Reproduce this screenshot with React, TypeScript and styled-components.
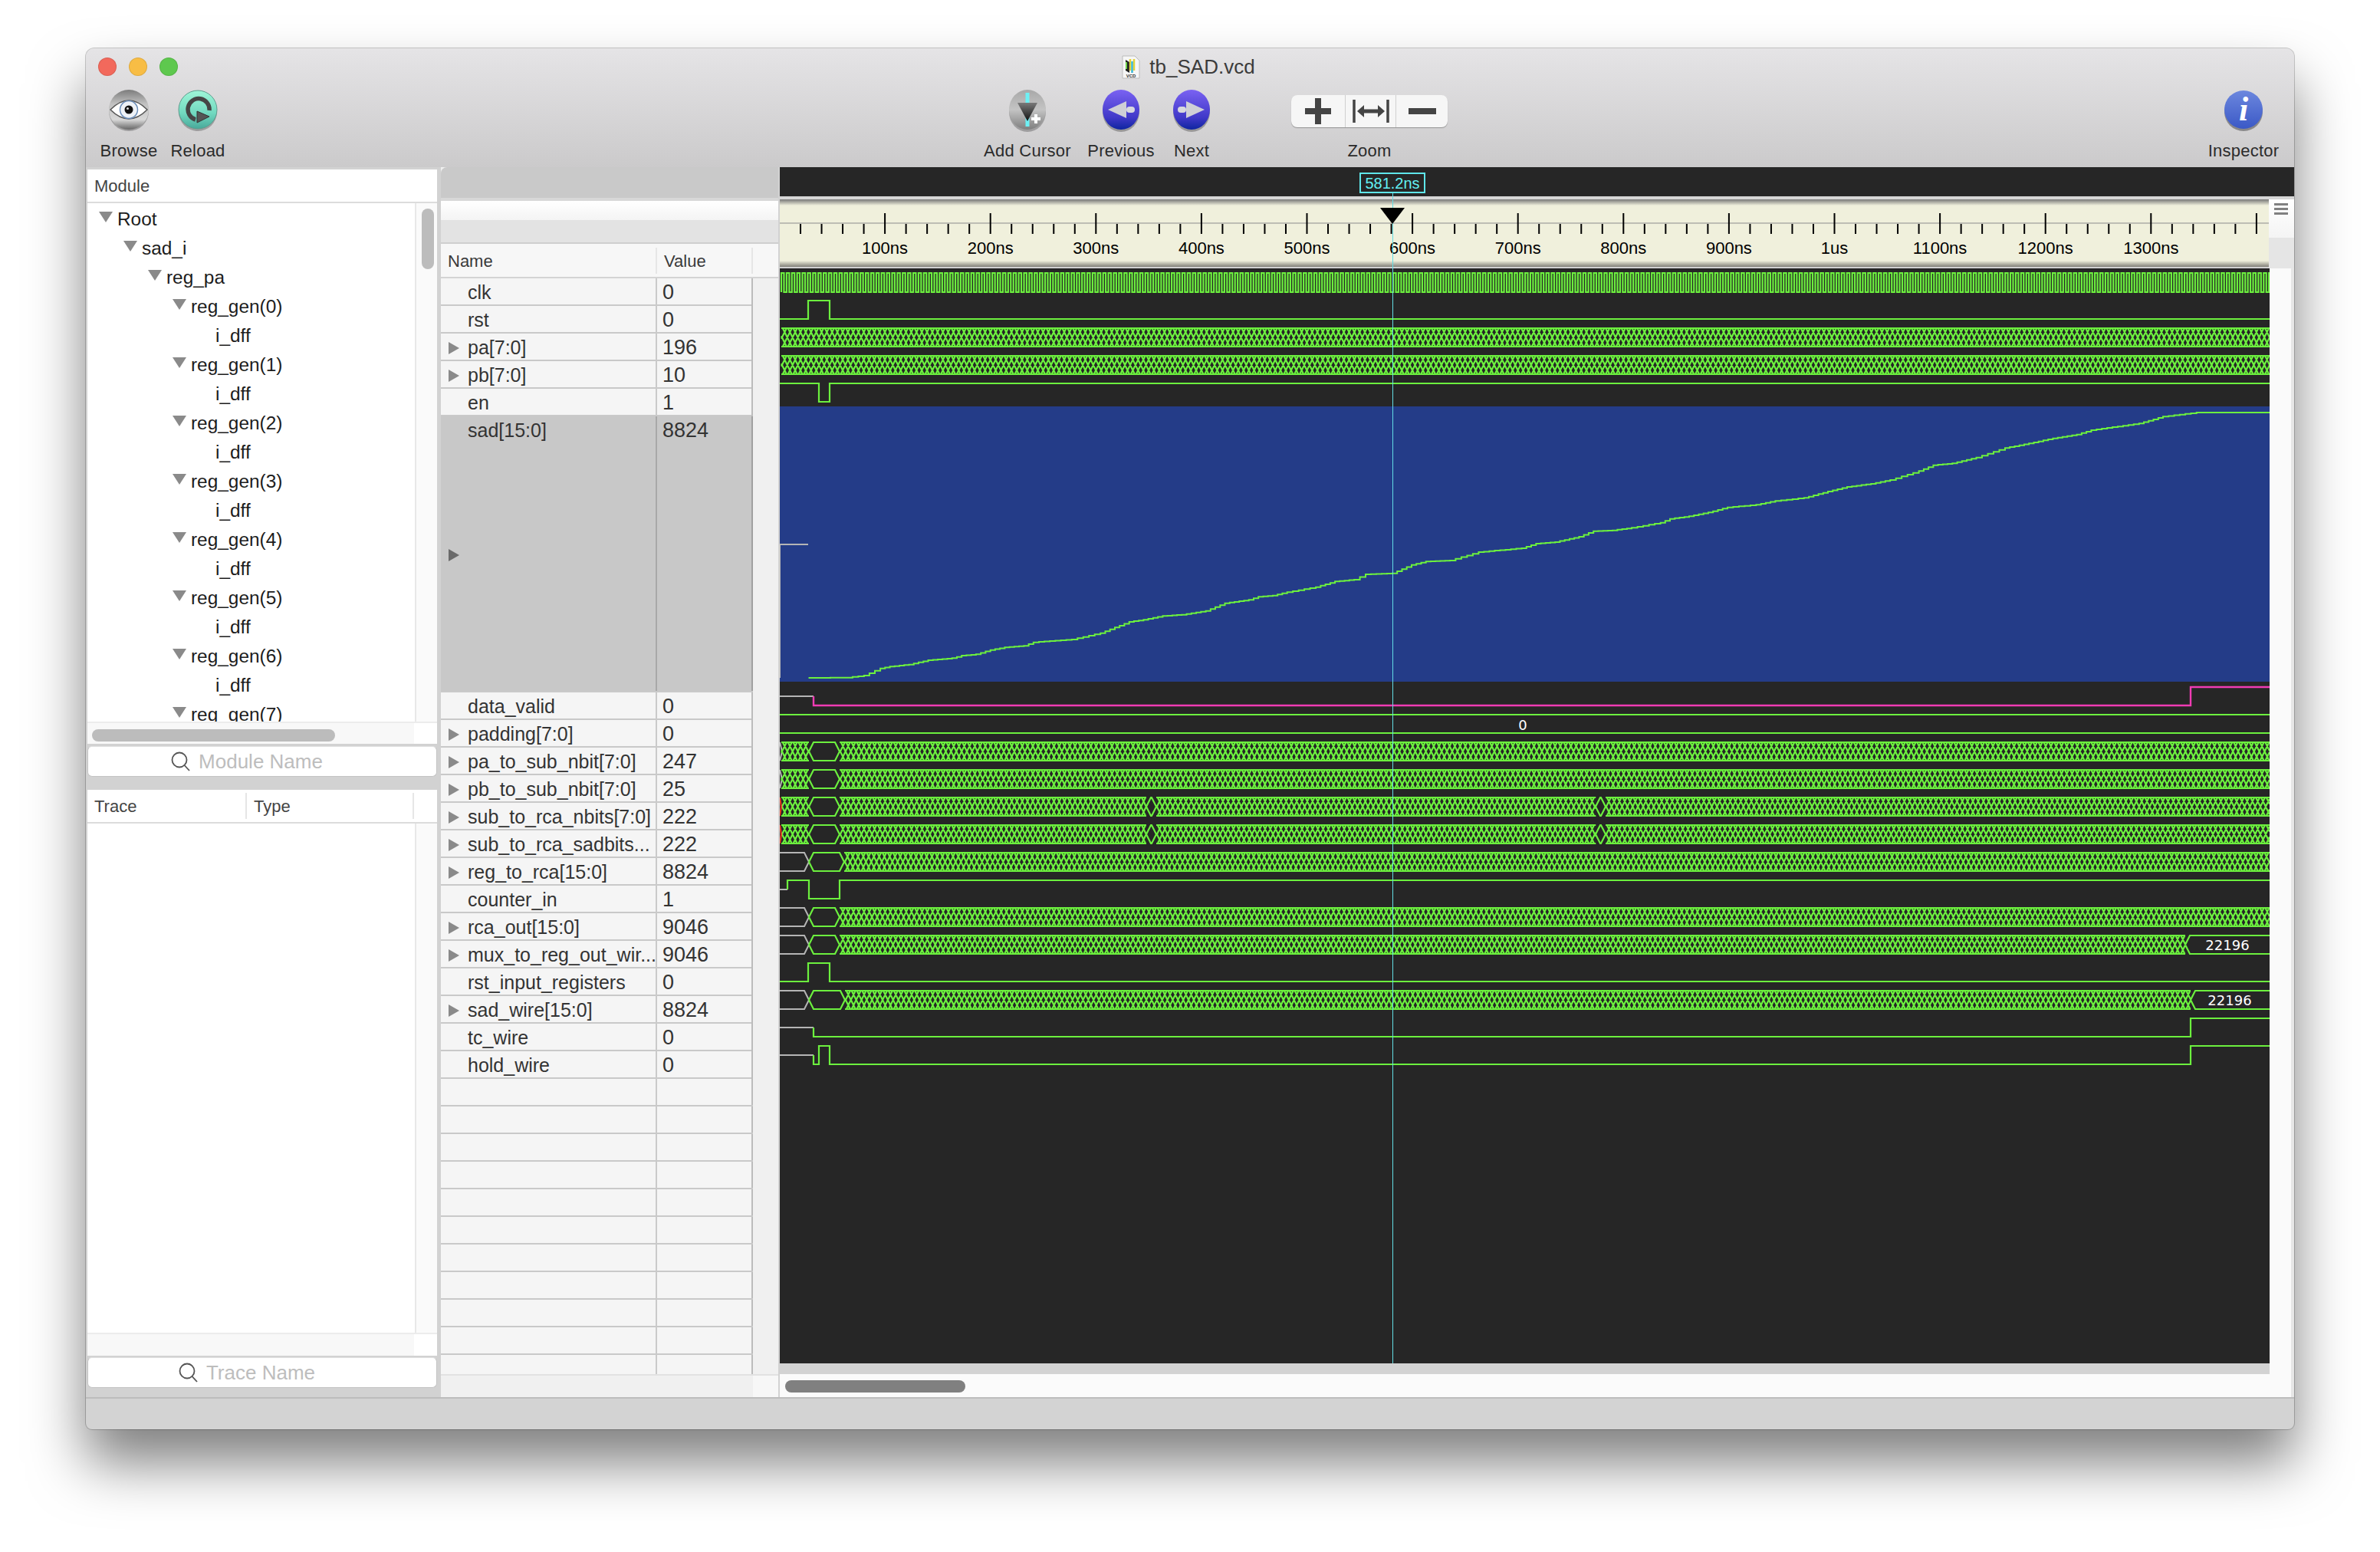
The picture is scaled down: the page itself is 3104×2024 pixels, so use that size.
import styled, { createGlobalStyle } from 'styled-components'

const GlobalStyle = createGlobalStyle`
  html, body {
    margin: 0;
    background: #fff;
    font-family: "Liberation Sans", Arial, sans-serif;
  }
`

const GREEN = '#6cf03e'
const GREY = '#b5b5b5'
const PINK = '#f03cb4'

const Page = styled.div`
  width: 3104px;
  height: 2024px;
  padding: 63px 0 0 112px;
  box-sizing: border-box;
  overflow: hidden;
`

const Window = styled.div`
  width: 2880px;
  height: 1801px;
  display: flex;
  flex-direction: column;
  border-radius: 11px 11px 8px 8px;
  background: #d3d3d3;
  overflow: hidden;
  box-shadow: 0 0 0 1px rgba(0, 0, 0, 0.2), 0 44px 72px rgba(0, 0, 0, 0.5);
`

const Header = styled.header`
  height: 155px;
  flex: none;
  display: flex;
  flex-direction: column;
  background: linear-gradient(#e5e4e6, #cbcacb);
`

const TitleRow = styled.div`
  height: 48px;
  display: grid;
  grid-template-columns: 1fr auto 1fr;
  align-items: center;
  padding-left: 16px;
`

const Lights = styled.div`
  display: flex;
  gap: 16px;
`

const Light = styled.span<{ $color: string }>`
  width: 24px;
  height: 24px;
  border-radius: 50%;
  background: ${(p) => p.$color};
  box-shadow: inset 0 0 0 1px rgba(0, 0, 0, 0.1);
`

const Title = styled.div`
  display: flex;
  align-items: center;
  gap: 12px;
  margin-right: 20px;
  font-size: 26px;
  color: #3b3b3b;
`

const Tools = styled.div`
  height: 107px;
  display: flex;
  padding-left: 11px;
`

const ToolGroup = styled.div<{ $left?: number }>`
  display: flex;
  margin-left: ${(p) => p.$left ?? 0}px;
`

const Tool = styled.div<{ $width: number }>`
  width: ${(p) => p.$width}px;
  display: flex;
  flex-direction: column;
  align-items: center;
  padding-top: 4px;
`

const IconBox = styled.div`
  height: 56px;
  display: flex;
  align-items: center;
  justify-content: center;
`

const ToolLabel = styled.div`
  margin-top: 13px;
  font-size: 22px;
  line-height: 26px;
  letter-spacing: 0.25px;
  color: #2b2b2b;
  white-space: nowrap;
`

const Segments = styled.div`
  width: 204px;
  height: 42px;
  margin-top: 4px;
  display: grid;
  grid-template-columns: 70px 66px 68px;
  border-radius: 8px;
  background: #f6f6f6;
  box-shadow: 0 1px 1px rgba(0, 0, 0, 0.3);
`

const Segment = styled.div<{ $divider?: boolean }>`
  display: flex;
  align-items: center;
  justify-content: center;
  border-left: ${(p) => (p.$divider ? '1px solid #d0d0d0' : 'none')};
`

const Main = styled.div`
  flex: none;
  height: 1604px;
  display: flex;
  padding-left: 2px;
  background: #d2d2d2;
  border-bottom: 2px solid #bdbdbd;
  box-sizing: content-box;
`

const LeftColumn = styled.section`
  width: 456px;
  margin: 3px 5px 0 0;
  display: flex;
  flex-direction: column;
`

const ColumnHead = styled.div<{ $height: number }>`
  height: ${(p) => p.$height}px;
  flex: none;
  display: flex;
  align-items: center;
  box-sizing: border-box;
  background: #fff;
  border-bottom: 2px solid #dcdcdc;
  font-size: 22px;
  color: #444;
`

const HeadCell = styled.div<{ $width?: number }>`
  width: ${(p) => (p.$width ? `${p.$width}px` : 'auto')};
  height: 34px;
  line-height: 35px;
  padding-left: 9px;
  box-sizing: border-box;
  flex: none;
  border-right: ${(p) => (p.$width ? '2px solid #e6e6e6' : 'none')};
`

const ScrollBody = styled.div<{ $height: number }>`
  height: ${(p) => p.$height}px;
  flex: none;
  display: flex;
  background: #fff;
`

const TreeList = styled.div`
  flex: 1;
  padding-top: 2px;
  overflow: hidden;
`

const TreeRow = styled.div<{ $depth: number }>`
  height: 38px;
  display: flex;
  align-items: center;
  padding-left: ${(p) => 15 + p.$depth * 32}px;
  font-size: 24.4px;
  color: #1c1c1c;
`

const DownArrow = styled.span<{ $hidden?: boolean }>`
  width: 0;
  height: 0;
  margin-right: 6px;
  border-left: 9px solid transparent;
  border-right: 9px solid transparent;
  border-top: 14px solid ${(p) => (p.$hidden ? 'transparent' : '#8a8a8a')};
  transform: translateY(-3px);
`

const Track = styled.div`
  width: 29px;
  flex: none;
  padding: 7px 0 0 7px;
  box-sizing: border-box;
  background: #fafafa;
  border-left: 2px solid #e8e8e8;
`

const VThumb = styled.div`
  width: 16px;
  height: 79px;
  border-radius: 8px;
  background: #bcbcbc;
`

const HScroll = styled.div<{ $height: number }>`
  height: ${(p) => p.$height}px;
  flex: none;
  box-sizing: border-box;
  padding: 8px 0 0 6px;
  background: linear-gradient(90deg, #f8f8f8 426px, #fff 426px);
  border-top: 2px solid #ececec;
`

const HThumb = styled.div`
  width: 317px;
  height: 16px;
  border-radius: 8px;
  background: #bcbcbc;
`

const SearchField = styled.div<{ $top: number; $bottom: number }>`
  height: 40px;
  flex: none;
  margin: ${(p) => p.$top}px 0 ${(p) => p.$bottom}px;
  padding-right: 40px;
  display: flex;
  align-items: center;
  justify-content: center;
  gap: 10px;
  box-sizing: border-box;
  background: #fff;
  border-radius: 6px;
  border: 1px solid #c4c4c4;
  border-top-color: #e0e0e0;
  font-size: 26px;
  color: #bdbdbd;
`

const TraceFill = styled.div`
  flex: 1;
`

const MiddleColumn = styled.section`
  width: 440px;
  flex: none;
  margin-right: 2px;
  display: flex;
  flex-direction: column;
  background: #f0f0f0;
`

const BandGrey = styled.div`
  height: 40px;
  flex: none;
  border-radius: 8px 0 0 0;
  background: #c9c9c9;
  border-bottom: 4px solid #d8d8d8;
  box-sizing: content-box;
`

const BandLight = styled.div`
  height: 54px;
  flex: none;
  background: linear-gradient(#fff, #f4f4f4 25px, #e3e3e3 25px);
  border-bottom: 2px solid #cfcfcf;
  box-sizing: content-box;
`

const TableHead = styled.div`
  height: 45px;
  flex: none;
  display: flex;
  align-items: center;
  box-sizing: border-box;
  background: #f7f7f7;
  border-bottom: 2px solid #d4d4d4;
  font-size: 22px;
  color: #3a3a3a;
`

const TableBody = styled.div`
  height: 1429px;
  flex: none;
  display: flex;
  overflow: hidden;
`

const Rows = styled.div`
  width: 407px;
  flex: none;
`

const Row = styled.div<{ $tall?: boolean; $selected?: boolean }>`
  height: ${(p) => (p.$tall ? 360 : 36)}px;
  display: grid;
  grid-template-columns: 282px 125px;
  box-sizing: border-box;
  background: ${(p) => (p.$selected ? '#c8c8c8' : '#f5f5f5')};
  border-bottom: 2px solid #c9c9c9;
  line-height: 37px;
  color: #333;
`

const NameCell = styled.div<{ $selected?: boolean }>`
  display: flex;
  padding-left: 10px;
  border-right: 2px solid ${(p) => (p.$selected ? '#a8a8a8' : '#cacaca')};
  font-size: 25px;
  white-space: nowrap;
  overflow: hidden;
`

const ValueCell = styled.div<{ $selected?: boolean }>`
  padding-left: 7px;
  border-right: 2px solid ${(p) => (p.$selected ? '#a0a0a0' : '#bcbcbc')};
  font-size: 27px;
`

const ArrowSlot = styled.span`
  width: 15px;
  margin-right: 10px;
  flex: none;
  align-self: center;
  display: flex;
`

const RightArrow = styled.span<{ $selected?: boolean }>`
  width: 0;
  height: 0;
  border-top: 8px solid transparent;
  border-bottom: 8px solid transparent;
  border-left: 14px solid ${(p) => (p.$selected ? '#6a6a6a' : '#8a8a8a')};
  transform: translateY(${(p) => (p.$selected ? 2 : 0)}px);
`

const MiddleScroll = styled.div`
  flex: 1;
  background: #f0f0f0;
`

const MiddleFoot = styled.div`
  flex: 1;
  background: linear-gradient(90deg, #f0f0f0 407px, #f7f7f7 407px);
  border-top: 2px solid #e2e2e2;
`

const RightColumn = styled.section`
  flex: 1;
  min-width: 0;
  position: relative;
  display: flex;
  flex-direction: column;
`

const TimeBar = styled.div`
  height: 38px;
  flex: none;
  background: #262626;
  border-bottom: 4px solid #d6d6d6;
  box-sizing: content-box;
`

const CursorTag = styled.div`
  position: absolute;
  top: 7px;
  left: 756px;
  width: 86px;
  height: 27px;
  display: flex;
  align-items: center;
  justify-content: center;
  box-sizing: border-box;
  border: 2px solid #5fe6ea;
  background: #262626;
  font-size: 20px;
  line-height: 26px;
  padding-top: 1px;
  color: #62f0f2;
`

const CursorLine = styled.div`
  position: absolute;
  top: 34px;
  left: 798.5px;
  width: 1.5px;
  height: 1526px;
  background: #62dde4;
  pointer-events: none;
`

const CursorHead = styled.div`
  position: absolute;
  top: 53px;
  left: 783px;
  width: 0;
  height: 0;
  border-left: 16px solid transparent;
  border-right: 16px solid transparent;
  border-top: 21px solid #000;
`

const RulerRow = styled.div`
  height: 90px;
  flex: none;
  display: flex;
`

const Ruler = styled.div`
  width: 1942px;
  height: 88px;
  flex: none;
  background: linear-gradient(#777 0, #f0f0dc 8px, #f0f0dc 80px, #807f78 88px);

  svg {
    display: block;
  }
`

const RulerSide = styled.div`
  flex: 1;
  display: flex;
  flex-direction: column;
  gap: 3.5px;
  padding: 5px 8px 0 7px;
  height: 45px;
  box-sizing: content-box;
  background: linear-gradient(#fff, #f4f4f4);
  box-shadow: 0 46px 0 #e5e5e5;
`

const MenuLine = styled.span`
  height: 2.5px;
  background: #808080;
`

const WaveRow = styled.div`
  flex: 1;
  display: flex;
  min-height: 0;
`

const WaveColumn = styled.div`
  width: 1943px;
  flex: none;
  display: flex;
  flex-direction: column;

  svg {
    display: block;
    flex: none;
  }
`

const WaveGap = styled.div`
  height: 14px;
  flex: none;
  background: #d3d3d3;
`

const WaveScroll = styled.div`
  flex: 1;
  padding: 8px 0 0 7px;
  background: #fbfbfb;
`

const WaveThumb = styled.div`
  width: 235px;
  height: 16px;
  border-radius: 8px;
  background: #808080;
`

const WaveSide = styled.div`
  flex: 1;
  background: #fafafa;
  border-right: 4px solid #e6e6e6;
`

const ticks = Array.from({ length: 70 }, (_, i) => i + 1)
const rulerLabels = ['100ns', '200ns', '300ns', '400ns', '500ns', '600ns', '700ns', '800ns', '900ns', '1us', '1100ns', '1200ns', '1300ns']
const tickX = (k: number) => 1016.5 + k * 27.52

// the list is scrolled: it stops at reg_gen(7), half cut by the panel edge
const TREE: [string, number, boolean][] = [
  ['Root', 0, true],
  ['sad_i', 1, true],
  ['reg_pa', 2, true],
  ...Array.from({ length: 7 }, (_, i): [string, number, boolean][] => [
    [`reg_gen(${i})`, 3, true],
    ['i_dff', 4, false],
  ]).flat(),
  ['reg_gen(7)', 3, true],
]

const SIGNALS: { name: string; value: string; bus?: boolean; tall?: boolean }[] = [
  { name: 'clk', value: '0' },
  { name: 'rst', value: '0' },
  { name: 'pa[7:0]', value: '196', bus: true },
  { name: 'pb[7:0]', value: '10', bus: true },
  { name: 'en', value: '1' },
  { name: 'sad[15:0]', value: '8824', bus: true, tall: true },
  { name: 'data_valid', value: '0' },
  { name: 'padding[7:0]', value: '0', bus: true },
  { name: 'pa_to_sub_nbit[7:0]', value: '247', bus: true },
  { name: 'pb_to_sub_nbit[7:0]', value: '25', bus: true },
  { name: 'sub_to_rca_nbits[7:0]', value: '222', bus: true },
  { name: 'sub_to_rca_sadbits...', value: '222', bus: true },
  { name: 'reg_to_rca[15:0]', value: '8824', bus: true },
  { name: 'counter_in', value: '1' },
  { name: 'rca_out[15:0]', value: '9046', bus: true },
  { name: 'mux_to_reg_out_wir...', value: '9046', bus: true },
  { name: 'rst_input_registers', value: '0' },
  { name: 'sad_wire[15:0]', value: '8824', bus: true },
  { name: 'tc_wire', value: '0' },
  { name: 'hold_wire', value: '0' },
]

// waveform helpers, all coordinates are page pixels (the svg viewBox starts at the panel corner)
const poly = (pts: number[][]) => pts.map((p, i) => `${i ? 'L' : 'M'}${p[0]} ${p[1]}`).join('')

const hex = (x0: number, x1: number, top: number) => {
  const r = 6
  return (
    poly([[x0, top + 12], [x0 + r, top], [x1 - r, top], [x1, top + 12], [x1 - r, top + 24], [x0 + r, top + 24], [x0, top + 12]])
  )
}

const hatch = (x0: number, x1: number, top: number) => {
  const period = 6.88
  const run = 12
  let d = `M${x0} ${top}H${x1}M${x0} ${top + 24}H${x1}`
  for (let x = x0 - run; x < x1; x += period) {
    const a = Math.max(x, x0)
    const b = Math.min(x + run, x1)
    const ya = ((a - x) / run) * 24
    const yb = ((b - x) / run) * 24
    d += `M${a.toFixed(2)} ${(top + ya).toFixed(2)}L${b.toFixed(2)} ${(top + yb).toFixed(2)}`
    d += `M${a.toFixed(2)} ${(top + 24 - ya).toFixed(2)}L${b.toFixed(2)} ${(top + 24 - yb).toFixed(2)}`
  }
  return d
}

const clock = () => {
  const half = 3.44
  let d = 'M1019 381'
  let high = false
  for (let x = 1019; x < 2960; x += half) {
    d += `V${high ? 381 : 356}H${Math.min(x + half, 2960).toFixed(2)}`
    high = !high
  }
  return d
}

const RIGHT = 2960

const sadTrace = () => {
  const pts = [
    [30, 1077], [70, 1076], [88, 1068], [105, 1040], [115, 1033], [135, 1025], [155, 1008], [180, 1000], [190, 990], [205, 985],
    [220, 968], [235, 958], [255, 952], [265, 938], [305, 927], [335, 902], [350, 880], [365, 858], [380, 850], [400, 835],
    [420, 830], [445, 815], [465, 785], [490, 772], [500, 760], [515, 755], [530, 742], [560, 722], [580, 700], [600, 693],
    [612, 672], [640, 668], [660, 635], [675, 622], [700, 618], [730, 585], [775, 570], [790, 552], [810, 546], [835, 525],
    [850, 503], [870, 500], [890, 490], [920, 470], [930, 455], [950, 445], [970, 430], [990, 410], [1020, 400], [1040, 385],
    [1070, 373], [1095, 348], [1115, 330], [1140, 318], [1160, 303], [1190, 268], [1205, 245], [1225, 238], [1250, 215], [1280, 178],
    [1305, 160], [1330, 140], [1355, 125], [1370, 108], [1420, 82], [1445, 55], [1480, 39],
  ].map(([zx, zy]) => [1017 + zx / 0.801, 525 + zy / 3])
  let d = `M${pts[0][0].toFixed(1)} ${pts[0][1].toFixed(1)}`
  // one small stair per clock period between the points read off the plot
  for (let i = 1; i < pts.length; i++) {
    const [x0, y0] = pts[i - 1]
    const [x1, y1] = pts[i]
    const n = Math.max(1, Math.round((x1 - x0) / 6.88))
    for (let s = 1; s <= n; s++) {
      const x = x0 + ((x1 - x0) * s) / n
      const y = y0 + ((y1 - y0) * s) / n
      d += `H${x.toFixed(1)}V${y.toFixed(1)}`
    }
  }
  return `${d}H${RIGHT}`
}

const greenPaths = [
  clock(),
  poly([[1017, 416], [1054, 416], [1054, 392], [1082, 392], [1082, 416], [RIGHT, 416]]),
  hatch(1019, RIGHT, 428),
  hatch(1019, RIGHT, 464),
  poly([[1017, 500], [1068, 500], [1068, 524], [1082, 524], [1082, 500], [RIGHT, 500]]),
  `M1017 932H${RIGHT}M1017 956H${RIGHT}`,
  hatch(1019, 1055, 968), hex(1055, 1095, 968), hatch(1095, RIGHT, 968),
  hatch(1019, 1055, 1004), hex(1055, 1095, 1004), hatch(1095, RIGHT, 1004),
  hatch(1019, 1055, 1040), hex(1055, 1095, 1040), hatch(1095, 1495, 1040), hex(1495, 1508, 1040), hatch(1508, 2081, 1040), hex(2081, 2094, 1040), hatch(2094, RIGHT, 1040),
  hatch(1019, 1055, 1076), hex(1055, 1095, 1076), hatch(1095, 1495, 1076), hex(1495, 1508, 1076), hatch(1508, 2081, 1076), hex(2081, 2094, 1076), hatch(2094, RIGHT, 1076),
  hex(1055, 1101, 1112), hatch(1101, RIGHT, 1112),
  poly([[1027, 1160], [1027, 1148], [1055, 1148], [1055, 1172], [1095, 1172], [1095, 1148], [RIGHT, 1148]]),
  hex(1055, 1095, 1184), hatch(1095, RIGHT, 1184),
  hex(1055, 1095, 1220), hatch(1095, 2850, 1220), hex(2850, 2980, 1220),
  poly([[1017, 1280], [1054, 1280], [1054, 1256], [1082, 1256], [1082, 1280], [RIGHT, 1280]]),
  hex(1055, 1102, 1292), hatch(1102, 2857, 1292), hex(2857, 2980, 1292),
  poly([[1061, 1340], [1061, 1352], [2857, 1352], [2857, 1328], [RIGHT, 1328]]),
  poly([[1061, 1376], [1061, 1388], [1068, 1388], [1068, 1364], [1082, 1364], [1082, 1388], [2857, 1388], [2857, 1364], [RIGHT, 1364]]),
]

const greyPaths = [
  'M1017 710H1054',
  'M1017 1112H1049L1055 1124L1049 1136H1017',
  'M1017 1160H1027',
  'M1017 1184H1049L1055 1196L1049 1208H1017',
  'M1017 1220H1049L1055 1232L1049 1244H1017',
  'M1017 1292H1049L1055 1304L1049 1316H1017',
  'M1017 908H1061',
  'M1017 1340H1061',
  'M1017 1376H1061',
  'M1017 968L1020 980L1017 992',
  'M1017 1004L1020 1016L1017 1028',
]

const WaveCanvas = () => (
  <svg width={1943} height={1428} viewBox="1017 350 1943 1428">
    <rect x={1017} y={350} width={1943} height={1428} fill="#262626" />
    <rect x={1017} y={530} width={1943} height={359} fill="#243c88" />
    <path d={greyPaths.join('')} fill="none" stroke={GREY} strokeWidth={2} />
    <path d="M1017.5 710V884" fill="none" stroke={GREY} strokeWidth={1} />
    <path d={sadTrace()} fill="none" stroke={GREEN} strokeWidth={2} />
    <path d={greenPaths.join('')} fill="none" stroke={GREEN} strokeWidth={2.2} />
    <path d={`M1061 908V920H2857V896H${RIGHT}`} fill="none" stroke={PINK} strokeWidth={2.4} />
    <path d="M1017 1040L1019 1052L1017 1064M1017 1076L1019 1088L1017 1100" fill="none" stroke="#ee3b24" strokeWidth={2} />
    <text x={1986} y={952} fontFamily="DejaVu Sans, sans-serif" fontSize={18} fill="#fff" textAnchor="middle">0</text>
    <text x={2905} y={1239} fontFamily="DejaVu Sans, sans-serif" fontSize={18} fill="#fff" textAnchor="middle">22196</text>
    <text x={2908} y={1311} fontFamily="DejaVu Sans, sans-serif" fontSize={18} fill="#fff" textAnchor="middle">22196</text>
  </svg>
)

const RulerDrawing = () => (
  <svg width={1942} height={88} viewBox="1017 260 1942 88">
    <rect x={1017} y={290} width={1942} height={2} fill="#bdbdb4" />
    {ticks.map((k) => (
      <rect key={k} x={tickX(k) - 1} y={k % 5 === 0 ? 278 : 292} width={2} height={k % 5 === 0 ? 27 : 13} fill="#000" />
    ))}
    {rulerLabels.map((label, i) => (
      <text key={label} x={tickX((i + 1) * 5)} y={331} textAnchor="middle" fontFamily="Liberation Sans, sans-serif" fontSize={22} fill="#000">
        {label}
      </text>
    ))}
  </svg>
)

const BrowseIcon = () => (
  <svg width={60} height={60} viewBox="-30 -30 60 60">
    <defs>
      <linearGradient id="browseBall" x1="0" y1="0" x2="0" y2="1">
        <stop offset="0" stopColor="#7c7c7c" />
        <stop offset="0.35" stopColor="#c0c0c0" />
        <stop offset="0.75" stopColor="#d8d8d8" />
        <stop offset="1" stopColor="#666" />
      </linearGradient>
    </defs>
    <circle cy={2} r={26} fill="#000" opacity={0.25} />
    <circle r={26} fill="url(#browseBall)" />
    <path d="M-24 0Q0 -24 24 0Q0 24 -24 0Z" fill="#fff" stroke="#555" strokeWidth={1.5} />
    <circle r={11.5} fill="#eef2f7" stroke="#6b8db8" strokeWidth={1.5} />
    <circle r={5.5} fill="#111" />
    <circle cx={-1.5} cy={-1.5} r={1.5} fill="#ddd" />
  </svg>
)

const ReloadIcon = () => (
  <svg width={60} height={60} viewBox="-30 -30 60 60">
    <defs>
      <linearGradient id="reloadBall" x1="0" y1="0" x2="0" y2="1">
        <stop offset="0" stopColor="#9ff6d8" />
        <stop offset="0.6" stopColor="#71d8bf" />
        <stop offset="1" stopColor="#48a89a" />
      </linearGradient>
    </defs>
    <circle cy={3} r={25} fill="#000" opacity={0.25} />
    <circle r={25} fill="url(#reloadBall)" stroke="#5d9d8e" strokeWidth={1} />
    <path d="M15 1A14 14 0 1 0 -3 13" fill="none" stroke="#454545" strokeWidth={5.5} />
    <path d="M-1 2L15 9L-1 17Z" fill="#555" stroke="#333" strokeWidth={1} />
  </svg>
)

const AddCursorIcon = () => (
  <svg width={60} height={60} viewBox="-30 -30 60 60">
    <defs>
      <linearGradient id="addBall" x1="0" y1="0" x2="0" y2="1">
        <stop offset="0" stopColor="#a8a8a8" />
        <stop offset="0.5" stopColor="#c4c4c4" />
        <stop offset="1" stopColor="#7e7e7e" />
      </linearGradient>
      <linearGradient id="addTri" x1="0" y1="0" x2="0" y2="1">
        <stop offset="0" stopColor="#7a7a7a" />
        <stop offset="1" stopColor="#111" />
      </linearGradient>
    </defs>
    <ellipse cy={3} rx={24} ry={26} fill="#000" opacity={0.25} />
    <ellipse rx={24} ry={26} fill="url(#addBall)" />
    <rect x={-2.5} y={-22} width={5} height={44} fill="#6df0f4" />
    <path d="M-13 -9H13L0 15Z" fill="url(#addTri)" />
    <path d="M5 12H17M11 6V18" stroke="#fff" strokeWidth={4} />
  </svg>
)

const StepIcon = ({ flip, id }: { flip?: boolean; id: string }) => (
  <svg width={60} height={60} viewBox="-30 -30 60 60">
    <defs>
      <linearGradient id={id} x1="0" y1="0" x2="0" y2="1">
        <stop offset="0" stopColor="#7a62f2" />
        <stop offset="0.7" stopColor="#4038c8" />
        <stop offset="1" stopColor="#0e25a0" />
      </linearGradient>
    </defs>
    <ellipse cy={3} rx={24} ry={26} fill="#000" opacity={0.28} />
    <ellipse rx={24} ry={26} fill={`url(#${id})`} />
    <g transform={flip ? 'scale(-1 1)' : undefined}>
      <path d="M-17 0L7 -11V11Z" fill="#cfcfd6" />
      <rect x={7} y={-4} width={11} height={8} rx={4} fill="#d8d8de" />
    </g>
  </svg>
)

const InspectorIcon = () => (
  <svg width={60} height={60} viewBox="-30 -30 60 60">
    <defs>
      <linearGradient id="infoBall" x1="0" y1="0" x2="0" y2="1">
        <stop offset="0" stopColor="#6c87de" />
        <stop offset="1" stopColor="#3b59c6" />
      </linearGradient>
    </defs>
    <circle cy={3} r={25} fill="#000" opacity={0.35} />
    <circle r={25} fill="url(#infoBall)" />
    <text x={0} y={14} textAnchor="middle" fontFamily="Liberation Serif, serif" fontStyle="italic" fontWeight="bold" fontSize={44} fill="#fff">
      i
    </text>
  </svg>
)

const DocIcon = () => (
  <svg width={24} height={31} viewBox="0 0 24 31">
    <path d="M1 1H17L23 7V30H1Z" fill="#f6f6f6" stroke="#bbb" />
    <path d="M5 6V20L10 23V9Z" fill="#222" />
    <path d="M11 5V20M16 5V20" stroke="#e3d23a" strokeWidth={2.5} />
    <path d="M13.5 8V23" stroke="#39b8d8" strokeWidth={2.5} />
    <path d="M6 9V18" stroke="#6fd24a" strokeWidth={2} />
    <text x={12} y={29} fontFamily="Liberation Sans, sans-serif" fontSize={6} fontWeight="bold" fill="#333" textAnchor="middle">
      VCD
    </text>
  </svg>
)

const SearchIcon = () => (
  <svg width={26} height={28} viewBox="0 0 26 28">
    <circle cx={11} cy={12} r={9.5} fill="none" stroke="#555" strokeWidth={1.8} />
    <path d="M17.5 19L24 26" stroke="#555" strokeWidth={1.8} />
  </svg>
)

const ZoomInIcon = () => (
  <svg width={34} height={34} viewBox="0 0 34 34">
    <path d="M0 17H34M17 0V34" stroke="#444" strokeWidth={8} />
  </svg>
)

const ZoomFitIcon = () => (
  <svg width={48} height={30} viewBox="0 0 48 30">
    <path d="M2 0V30M46 0V30" stroke="#444" strokeWidth={3.5} />
    <path d="M12 15H36" stroke="#444" strokeWidth={5} />
    <path d="M6 15L15 7V23ZM42 15L33 7V23Z" fill="#444" />
  </svg>
)

const ZoomOutIcon = () => (
  <svg width={36} height={8} viewBox="0 0 36 8">
    <rect width={36} height={8} fill="#444" />
  </svg>
)

export default function App() {
  return (
    <>
      <GlobalStyle />
      <Page>
        <Window>
          <Header>
            <TitleRow>
              <Lights>
                <Light $color="#f2695c" />
                <Light $color="#f8bd45" />
                <Light $color="#5ec84e" />
              </Lights>
              <Title>
                <DocIcon />
                tb_SAD.vcd
              </Title>
            </TitleRow>
            <Tools>
              <ToolGroup>
                <Tool $width={90}>
                  <IconBox><BrowseIcon /></IconBox>
                  <ToolLabel>Browse</ToolLabel>
                </Tool>
                <Tool $width={90}>
                  <IconBox><ReloadIcon /></IconBox>
                  <ToolLabel>Reload</ToolLabel>
                </Tool>
              </ToolGroup>
              <ToolGroup $left={975}>
                <Tool $width={124}>
                  <IconBox><AddCursorIcon /></IconBox>
                  <ToolLabel>Add Cursor</ToolLabel>
                </Tool>
                <Tool $width={120}>
                  <IconBox><StepIcon id="stepPrev" /></IconBox>
                  <ToolLabel>Previous</ToolLabel>
                </Tool>
                <Tool $width={64}>
                  <IconBox><StepIcon id="stepNext" flip /></IconBox>
                  <ToolLabel>Next</ToolLabel>
                </Tool>
              </ToolGroup>
              <ToolGroup $left={98}>
                <Tool $width={204}>
                  <IconBox>
                    <Segments>
                      <Segment><ZoomInIcon /></Segment>
                      <Segment $divider><ZoomFitIcon /></Segment>
                      <Segment $divider><ZoomOutIcon /></Segment>
                    </Segments>
                  </IconBox>
                  <ToolLabel>Zoom</ToolLabel>
                </Tool>
              </ToolGroup>
              <ToolGroup $left={988}>
                <Tool $width={100}>
                  <IconBox><InspectorIcon /></IconBox>
                  <ToolLabel>Inspector</ToolLabel>
                </Tool>
              </ToolGroup>
            </Tools>
          </Header>
          <Main>
            <LeftColumn>
              <ColumnHead $height={44}>
                <HeadCell>Module</HeadCell>
              </ColumnHead>
              <ScrollBody $height={676}>
                <TreeList>
                  {TREE.map(([label, depth, open], i) => (
                    <TreeRow key={i} $depth={depth}>
                      <DownArrow $hidden={!open} />
                      {label}
                    </TreeRow>
                  ))}
                </TreeList>
                <Track><VThumb /></Track>
              </ScrollBody>
              <HScroll $height={29}><HThumb /></HScroll>
              <SearchField $top={3} $bottom={17}>
                <SearchIcon />
                Module Name
              </SearchField>
              <ColumnHead $height={44}>
                <HeadCell $width={208}>Trace</HeadCell>
                <HeadCell $width={218}>Type</HeadCell>
              </ColumnHead>
              <ScrollBody $height={664}>
                <TraceFill />
                <Track />
              </ScrollBody>
              <HScroll $height={30} />
              <SearchField $top={2} $bottom={12}>
                <SearchIcon />
                Trace Name
              </SearchField>
            </LeftColumn>
            <MiddleColumn>
              <BandGrey />
              <BandLight />
              <TableHead>
                <HeadCell $width={282}>Name</HeadCell>
                <HeadCell $width={125}>Value</HeadCell>
              </TableHead>
              <TableBody>
                <Rows>
                  {SIGNALS.map((s) => (
                    <Row key={s.name} $tall={s.tall} $selected={s.tall}>
                      <NameCell $selected={s.tall}>
                        <ArrowSlot>{s.bus && <RightArrow $selected={s.tall} />}</ArrowSlot>
                        {s.name}
                      </NameCell>
                      <ValueCell $selected={s.tall}>{s.value}</ValueCell>
                    </Row>
                  ))}
                  {Array.from({ length: 11 }, (_, i) => (
                    <Row key={i}>
                      <NameCell />
                      <ValueCell />
                    </Row>
                  ))}
                </Rows>
                <MiddleScroll />
              </TableBody>
              <MiddleFoot />
            </MiddleColumn>
            <RightColumn>
              <TimeBar />
              <RulerRow>
                <Ruler><RulerDrawing /></Ruler>
                <RulerSide>
                  <MenuLine />
                  <MenuLine />
                  <MenuLine />
                </RulerSide>
              </RulerRow>
              <WaveRow>
                <WaveColumn>
                  <WaveCanvas />
                  <WaveGap />
                  <WaveScroll><WaveThumb /></WaveScroll>
                </WaveColumn>
                <WaveSide />
              </WaveRow>
              <CursorLine />
              <CursorHead />
              <CursorTag>581.2ns</CursorTag>
            </RightColumn>
          </Main>
        </Window>
      </Page>
    </>
  )
}
